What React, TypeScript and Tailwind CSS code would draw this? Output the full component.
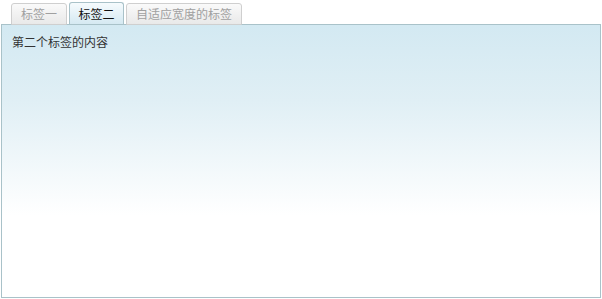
export default function App() {
  const font = { fontFamily: '"Noto Sans CJK SC", "Noto Sans", sans-serif' };
  return (
    <div className="w-[602px] h-[299px] bg-white pt-[3px]" style={font}>
      <div className="flex gap-[2px] pl-[11px] relative z-10 h-[21px] items-stretch">
        <div className="w-[56px] h-[22px] flex items-center justify-center text-[12px] leading-none text-[#a0a0a0] border border-[#cfcfcf] rounded-t-[3px] bg-gradient-to-b from-[#fafafa] to-[#e9e9e9]">
          标签一
        </div>
        <div className="w-[55px] h-[22px] mt-[-1px] flex items-center justify-center text-[12px] leading-none text-[#111] border border-b-0 border-[#a9c2c9] rounded-t-[3px] bg-gradient-to-b from-[#f6fbfd] to-[#d5e9f2]">
          标签二
        </div>
        <div className="w-[116px] h-[22px] flex items-center justify-center text-[12px] leading-none text-[#a0a0a0] border border-[#cfcfcf] rounded-t-[3px] bg-gradient-to-b from-[#fafafa] to-[#e9e9e9]">
          自适应宽度的标签
        </div>
      </div>
      <div className="ml-[1px] w-[600px] h-[274px] border border-[#a9c2c9] bg-[linear-gradient(to_bottom,#d3e9f2_0%,#e0eff5_28%,#ffffff_70%,#ffffff_100%)] px-[10px] pt-[9px] text-[12px] text-[#333] leading-[16px]">
        第二个标签的内容
      </div>
    </div>
  );
}
